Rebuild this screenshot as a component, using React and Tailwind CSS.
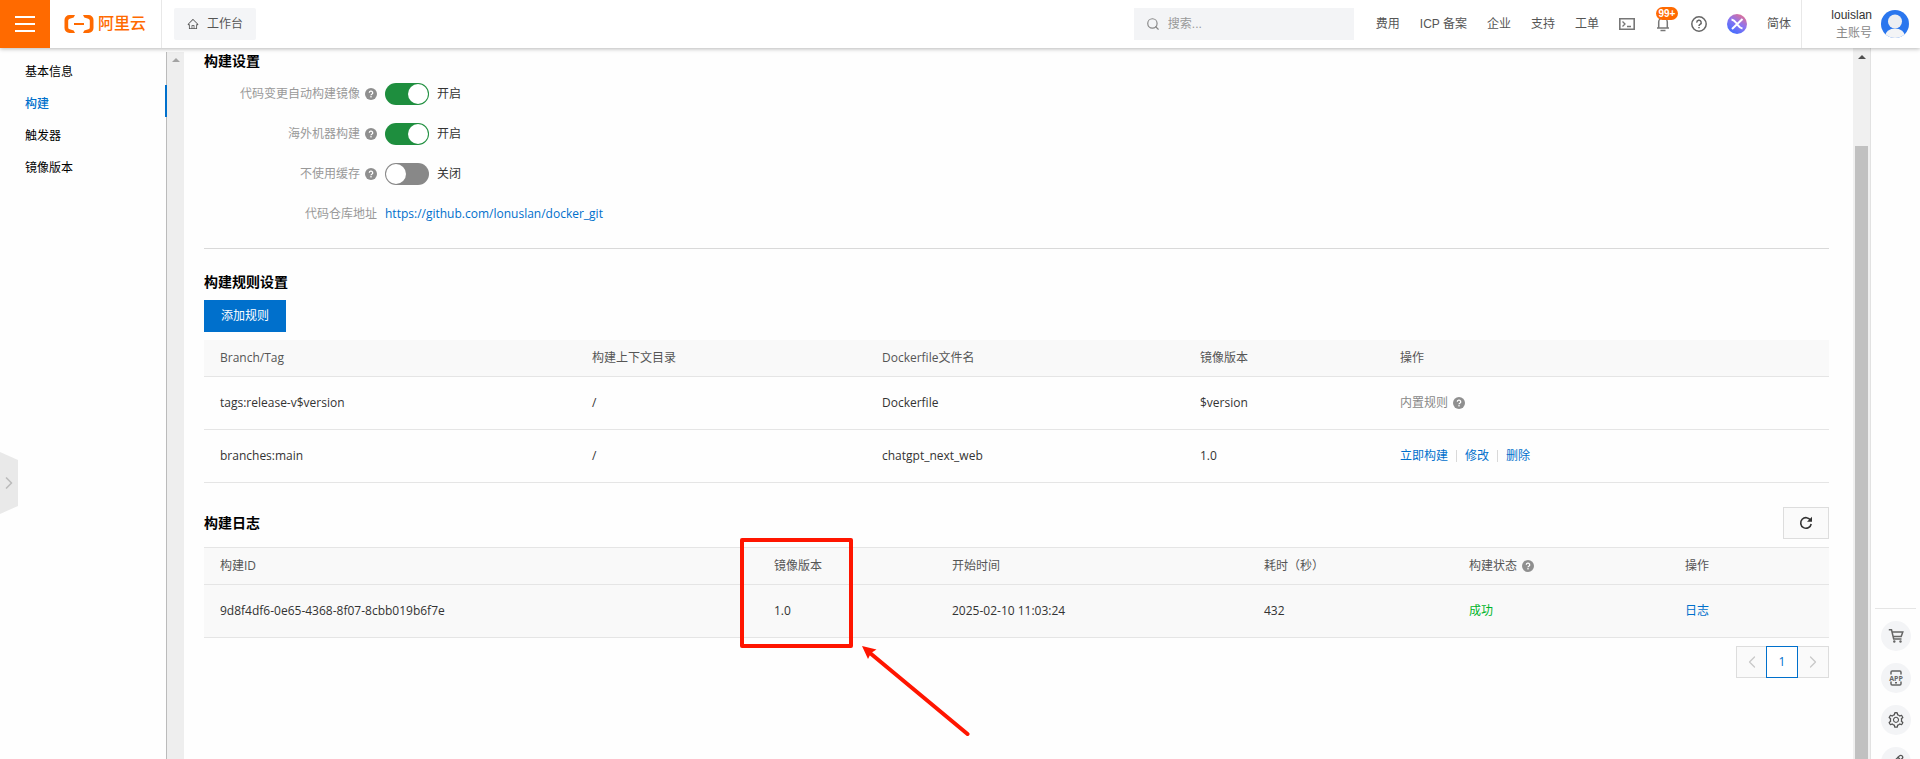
import { ChevronLeft, ChevronRight, Pencil, Search } from "lucide-react";
import { AiOutlineHome, AiOutlineSetting } from "react-icons/ai";

const SIDE_LINKS = ["基本信息", "构建", "触发器", "镜像版本"];

const SWITCHES = [
  { id: "auto-build", label: "代码变更自动构建镜像", on: true },
  { id: "overseas", label: "海外机器构建", on: true },
  { id: "no-cache", label: "不使用缓存", on: false },
];

const NAV_LINKS = ["费用", "ICP 备案", "企业", "支持", "工单"];

function HelpDot() {
  return (
    <svg viewBox="0 0 12 12" className="size-3 shrink-0" aria-hidden="true">
      <circle cx="6" cy="6" r="6" fill="#8f8f8f" />
      <path d="M4.3 4.8a1.7 1.7 0 1 1 2.5 1.5c-.5.3-.8.5-.8 1" fill="none" stroke="#fff" strokeWidth="1.3" />
      <rect x="5.3" y="8.1" width="1.4" height="1.3" fill="#fff" />
    </svg>
  );
}

function Logo() {
  return (
    <a href="#home" className="flex items-center gap-1 text-[#ff6a00]">
      <svg viewBox="0 0 30 20" className="h-5 w-[30px]" fill="currentColor" aria-hidden="true">
        <path d="M11 1H5.5A5 5 0 0 0 .5 6v8a5 5 0 0 0 5 5H11l-1.3-2.6-4-1.1a2 2 0 0 1-1.5-1.9V6.6a2 2 0 0 1 1.5-1.9l4-1.1z" />
        <path d="M19 1h5.5a5 5 0 0 1 5 5v8a5 5 0 0 1-5 5H19l1.3-2.6 4-1.1a2 2 0 0 0 1.5-1.9V6.6a2 2 0 0 0-1.5-1.9l-4-1.1z" />
        <rect x="10" y="9" width="10" height="2" />
      </svg>
      <span className="text-base leading-5 font-medium">阿里云</span>
    </a>
  );
}

function Header() {
  return (
    <header className="relative z-20 flex h-12 shrink-0 items-center bg-white font-['Liberation_Sans','Noto_Sans_CJK_SC',sans-serif] text-xs text-[#555] shadow-[0_1px_4px_rgba(0,0,0,0.28)]">
      <button type="button" aria-label="菜单" className="flex h-12 w-[50px] flex-col items-center justify-center gap-[5px] bg-[#ff6a00]">
        <span className="h-0.5 w-5 bg-white" />
        <span className="h-0.5 w-5 bg-white" />
        <span className="h-0.5 w-5 bg-white" />
      </button>
      <div className="flex h-12 w-28 items-center border-r border-[#e8e8e8] pl-3.5">
        <Logo />
      </div>
      <a href="#workbench" className="ml-3 flex h-8 items-center gap-2 rounded-xs bg-[#f4f5f7] px-[13px]">
        <AiOutlineHome className="size-3" />
        工作台
      </a>

      <label className="ml-auto flex h-8 w-[220px] items-center gap-2 bg-[#f3f4f6] pl-3">
        <Search className="size-3.5 text-[#888]" />
        <input type="search" aria-label="搜索" placeholder="搜索..." className="w-40 bg-transparent outline-none placeholder:text-[#999]" />
      </label>
      <nav className="ml-[22px] flex items-center gap-5">
        {NAV_LINKS.map((label) => (
          <a key={label} href="#nav">{label}</a>
        ))}
        <button type="button" aria-label="终端">
          <svg viewBox="0 0 16 16" className="size-4" fill="none" stroke="#777" strokeWidth="1.6">
            <path d="M.8 2.800h14.400v10.400H.8z" />
            <path d="M3.500 5.500 6 8l-2.500 2.500M8 10.500h4" strokeWidth="1.300" />
          </svg>
        </button>
        <button type="button" aria-label="消息" className="relative">
          <svg viewBox="0 0 16 16" className="size-4" fill="none" stroke="#777" strokeWidth="1.5">
            <path d="M3.700 12V6a4.300 4.300 0 0 1 8.600 0v6M2 12h12M5.500 14.600h5" />
          </svg>
          <span className="absolute -top-[9px] left-px flex h-[13px] w-[22px] items-center justify-center rounded-full bg-[#ff6a00] text-[10px] leading-3 font-bold text-white">99+</span>
        </button>
        <button type="button" aria-label="帮助">
          <svg viewBox="0 0 16 16" className="size-4" fill="none" stroke="#666" strokeWidth="1.500">
            <circle cx="8" cy="8" r="7.200" />
            <path d="M5.800 6.600a2.200 2.200 0 1 1 3.300 1.800c-.8.500-1.100.8-1.100 1.500M8 10.900v1.400" />
          </svg>
        </button>
        <button type="button" aria-label="AI 助理">
          <svg viewBox="0 0 20 20" className="size-5">
            <defs>
              <linearGradient id="ai" x1="0.200" y1="1" x2=".8" y2="0">
                <stop offset="0" stopColor="#3b6cff" />
                <stop offset=".55" stopColor="#8d74f0" />
                <stop offset="1" stopColor="#e8708c" />
              </linearGradient>
            </defs>
            <circle cx="10" cy="10" r="10" fill="url(#ai)" />
            <path d="M4.500 5.500c3 .3 4 2.500 5.500 4.500s2.500 4 5.500 4.500M15.500 5 5 15" fill="none" stroke="#fff" strokeWidth="2" />
          </svg>
        </button>
        <a href="#lang">简体</a>
      </nav>
      <div className="ml-2.5 flex h-12 w-[119px] items-center justify-end gap-[9px] border-l border-[#e8e8e8] pr-[11px]">
        <div className="text-right leading-[18px]">
          <p className="text-[#333]">louislan</p>
          <p className="text-[#888]">主账号</p>
        </div>
        <svg viewBox="0 0 28 28" className="size-7" aria-hidden="true">
          <defs>
            <clipPath id="face"><circle cx="14" cy="14" r="14" /></clipPath>
          </defs>
          <g clipPath="url(#face)">
            <rect width="28" height="28" fill="#2a76ee" />
            <ellipse cx="14" cy="26.500" rx="10" ry="8" fill="#f3f4f6" />
            <circle cx="14" cy="11.500" r="7" fill="#eceef2" />
          </g>
        </svg>
      </div>
    </header>
  );
}

function Sidebar() {
  return (
    <aside className="flex w-[184px] shrink-0 pt-1">
      <nav className="relative -mr-px flex-1 pt-px text-xs text-black">
        {SIDE_LINKS.map((label) => (
          <a
            key={label}
            href="#side"
            className={
              label === "构建"
                ? "block h-8 border-r-2 border-[#0070cc] pt-1.5 pl-[25px] leading-[26px] font-medium text-[#0070cc]"
                : "block h-8 pt-1.5 pl-[25px] leading-[26px]"
            }
          >
            {label}
          </a>
        ))}
      </nav>
      <div className="flex w-[18px] justify-center border-l border-[#bbb] bg-[#eee] pt-1.5">
        <svg viewBox="0 0 8 4" className="h-1 w-2" fill="#a3a3a3"><path d="M0 4 4 0l4 4z" /></svg>
      </div>
    </aside>
  );
}

function BuildSettings() {
  return (
    <section className="border-b border-[#d9d9d9] pb-3.5">
      <h2 className="text-sm leading-5 font-bold text-black">构建设置</h2>
      <div className="mt-[3px]">
        {SWITCHES.map(({ id, label, on }) => (
          <div key={id} className="flex h-10 items-center">
            <label htmlFor={id} className="flex w-[173px] items-center justify-end gap-[5px] text-[#999]">
              {label}
              <HelpDot />
            </label>
            <input
              id={id}
              type="checkbox"
              role="switch"
              defaultChecked={on}
              className="ml-2 h-[22px] w-11 appearance-none rounded-full bg-[#888] p-px before:block before:size-5 before:rounded-full before:bg-white checked:bg-[#1e8e3e] checked:before:ml-[22px]"
            />
            <span className="ml-2 text-[#333]">{on ? "开启" : "关闭"}</span>
          </div>
        ))}
        <div className="flex h-10 items-center">
          <span className="w-[173px] text-right text-[#999]">代码仓库地址</span>
          <a href="https://github.com/lonuslan/docker_git" className="ml-2 text-[#0070cc]">https://github.com/lonuslan/docker_git</a>
        </div>
      </div>
    </section>
  );
}

function RulesTable() {
  return (
    <section className="pt-[23px]">
      <h2 className="text-sm leading-5 font-bold text-black">构建规则设置</h2>
      <button type="button" className="mt-2 block h-8 bg-[#0070cc] px-[17px] text-white">添加规则</button>
      <table className="mt-2 w-full table-fixed text-left">
        <colgroup>
          <col className="w-[372px]" />
          <col className="w-[290px]" />
          <col className="w-[318px]" />
          <col className="w-[200px]" />
          <col className="w-[445px]" />
        </colgroup>
        <thead>
          <tr className="h-9 border-b border-[#e5e5e5] bg-[#f9f9f9] text-[#555]">
            <th className="px-4 font-normal">Branch/Tag</th>
            <th className="px-4 font-normal">构建上下文目录</th>
            <th className="px-4 font-normal">Dockerfile文件名</th>
            <th className="px-4 font-normal">镜像版本</th>
            <th className="px-4 font-normal">操作</th>
          </tr>
        </thead>
        <tbody className="text-[#333]">
          <tr className="h-[53px] border-b border-[#e5e5e5]">
            <td className="px-4">tags:release-v$version</td>
            <td className="px-4">/</td>
            <td className="px-4">Dockerfile</td>
            <td className="px-4">$version</td>
            <td className="px-4">
              <span className="flex items-center gap-[5px] text-[#888]">内置规则 <HelpDot /></span>
            </td>
          </tr>
          <tr className="h-[53px] border-b border-[#e5e5e5]">
            <td className="px-4">branches:main</td>
            <td className="px-4">/</td>
            <td className="px-4">chatgpt_next_web</td>
            <td className="px-4">1.0</td>
            <td className="px-4">
              <span className="flex items-center gap-2 text-[#0070cc]">
                <a href="#build">立即构建</a>
                <i className="h-3 w-px bg-[#d9d9d9]" />
                <a href="#edit">修改</a>
                <i className="h-3 w-px bg-[#d9d9d9]" />
                <a href="#delete">删除</a>
              </span>
            </td>
          </tr>
        </tbody>
      </table>
    </section>
  );
}

// Red frame and arrow drawn over the version column
function VersionMark() {
  return (
    <>
      <span className="pointer-events-none absolute -top-2.5 -left-[18px] h-[110px] w-[113px] rounded-xs border-4 border-[#ff1500]" />
      <svg viewBox="0 0 108 92" className="pointer-events-none absolute top-[98px] left-[104px] h-[92px] w-[108px]">
        <path d="M8 7 105.500 88" stroke="#ff1500" strokeWidth="4" strokeLinecap="round" />
        <path d="M0 0 14.500 3.500 9 7 6 13z" fill="#ff1500" />
      </svg>
    </>
  );
}

function BuildLogs() {
  return (
    <section className="pt-6">
      <div className="flex items-center justify-between">
        <h2 className="text-sm leading-5 font-bold text-black">构建日志</h2>
        <button type="button" aria-label="刷新" className="flex h-8 w-[46px] items-center justify-center border border-[#ddd] bg-[#fafafa]">
          <svg viewBox="0 0 14 14" className="size-3.5" fill="none" stroke="#333" strokeWidth="1.600">
            <path d="M11.600 4.300A5.300 5.300 0 1 0 12.200 8" />
            <path d="M13 .8v4.900H8z" fill="#333" stroke="none" />
          </svg>
        </button>
      </div>
      <table className="mt-2 w-full table-fixed text-left">
        <colgroup>
          <col className="w-[554px]" />
          <col className="w-[178px]" />
          <col className="w-[312px]" />
          <col className="w-[205px]" />
          <col className="w-[216px]" />
          <col className="w-[160px]" />
        </colgroup>
        <thead>
          <tr className="h-[37px] border-y border-[#e5e5e5] bg-[#f9f9f9] text-[#555]">
            <th className="px-4 font-normal">构建ID</th>
            <th className="relative px-4 font-normal">
              镜像版本
              <VersionMark />
            </th>
            <th className="px-4 font-normal">开始时间</th>
            <th className="px-4 font-normal">耗时（秒）</th>
            <th className="px-4 font-normal">
              <span className="flex items-center gap-[5px]">构建状态 <HelpDot /></span>
            </th>
            <th className="px-4 font-normal">操作</th>
          </tr>
        </thead>
        <tbody className="text-[#333]">
          <tr className="h-[53px] border-b border-[#e5e5e5] bg-[#f9f9f9]">
            <td className="px-4">9d8f4df6-0e65-4368-8f07-8cbb019b6f7e</td>
            <td className="px-4">1.0</td>
            <td className="px-4">2025-02-10 11:03:24</td>
            <td className="px-4">432</td>
            <td className="px-4 text-[#00b42a]">成功</td>
            <td className="px-4"><a href="#log" className="text-[#0070cc]">日志</a></td>
          </tr>
        </tbody>
      </table>
      <div className="mt-2 flex h-8 justify-end text-[#c8c8c8]">
        <button type="button" aria-label="上一页" className="flex w-[30px] items-center justify-center border border-r-0 border-[#ddd] bg-[#fafafa]">
          <ChevronLeft className="size-5" strokeWidth={1.5} />
        </button>
        <button type="button" className="w-8 border border-[#0070cc] bg-white text-[#0070cc]">1</button>
        <button type="button" aria-label="下一页" className="flex w-[31px] items-center justify-center border border-l-0 border-[#ddd] bg-[#fafafa]">
          <ChevronRight className="size-5" strokeWidth={1.5} />
        </button>
      </div>
    </section>
  );
}

function ToolRail() {
  const item = "flex size-[30px] shrink-0 items-center justify-center rounded-full bg-[#f3f4f6] text-[#555]";
  return (
    <aside className="flex w-[49px] shrink-0 flex-col justify-end overflow-hidden px-1">
      <div className="flex h-[151px] flex-col items-center gap-3 border-t border-[#e5e5e5] pt-3">
        <button type="button" aria-label="购物车" className={item}>
          <svg viewBox="0 0 16 16" className="size-4" fill="none" stroke="#666" strokeWidth="1.500">
            <path d="M.8 1.800h2.700l2.200 9.200h7.800M4 4h10.800l-1.600 4.600H5.100" />
            <circle cx="6.300" cy="13.500" r="1.200" fill="#666" stroke="none" />
            <circle cx="12.500" cy="13.500" r="1.200" fill="#666" stroke="none" />
          </svg>
        </button>
        <button type="button" aria-label="APP" className={item}>
          <svg viewBox="0 0 16 16" className="size-4" fill="none" stroke="#666" strokeWidth="1.500">
            <path d="M3 4.500V2.200C3 1.400 3.400 1 4.200 1h7.600c.8 0 1.200.4 1.200 1.200v2.300M3 11.500v2.300c0 .8.4 1.200 1.200 1.200h7.600c.8 0 1.200-.4 1.200-1.200v-2.300M7 12.700h2" />
            <text x="8" y="10.500" textAnchor="middle" fontSize="7" fontWeight="700" fill="#666" stroke="none">APP</text>
          </svg>
        </button>
        <button type="button" aria-label="设置" className={item}><AiOutlineSetting className="size-[18px]" /></button>
        <button type="button" aria-label="反馈" className={item}><Pencil className="size-4" /></button>
      </div>
    </aside>
  );
}

export default function App() {
  return (
    <div className="relative flex h-screen flex-col overflow-hidden bg-[#fefefe] font-['Open_Sans','Noto_Sans_CJK_SC',sans-serif] text-xs">
      <Header />
      <div className="flex min-h-0 flex-1">
        <Sidebar />
        <main className="min-w-0 flex-1 overflow-hidden pt-[3px] pr-6 pl-5">
          <BuildSettings />
          <RulesTable />
          <BuildLogs />
        </main>
        <div className="flex w-[18px] shrink-0 flex-col items-center border-r border-[#e2e2e2] bg-[#f0f0f0] pt-[7px]">
          <svg viewBox="0 0 8 4" className="h-1 w-2 shrink-0" fill="#505050"><path d="M0 4 4 0l4 4z" /></svg>
          <div className="mt-[87px] w-[13px] flex-1 bg-[#c1c1c1]" />
        </div>
        <ToolRail />
      </div>
      <button type="button" aria-label="展开" className="absolute top-[452px] left-0 flex h-[62px] w-[18px] items-center justify-center bg-[#e9e9e9] text-[#bbb] [clip-path:polygon(0_0,100%_13%,100%_87%,0_100%)]">
        <ChevronRight className="size-5 shrink-0" />
      </button>
    </div>
  );
}
